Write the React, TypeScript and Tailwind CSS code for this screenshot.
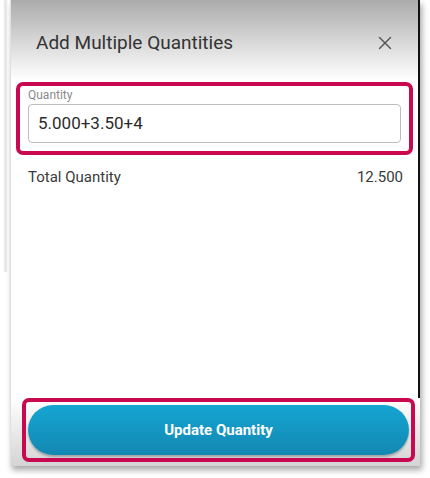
import { X } from "lucide-react";

export default function App() {
  return (
    <div className="relative h-[478px] w-[430px] overflow-hidden bg-white font-['Roboto',sans-serif]">
      {/* faint backdrop edge on the left */}
      <div className="absolute left-[3px] top-0 h-[272px] w-[5px] bg-gradient-to-r from-transparent via-[#e4e4e4] to-transparent" />

      <div className="relative ml-[10px] flex h-[466px] w-[410px] flex-col border-l border-[#e0e0e0] bg-white shadow-[2px_4px_6px_rgba(0,0,0,0.35)]">
        {/* Header */}
        <div className="flex h-[80px] items-center justify-between border-r-2 border-[#111] bg-gradient-to-b from-[#ababab] via-[#d6d6d6] to-white pl-[25px] pr-[22px] pt-[6px]">
          <h1 className="text-[19px] text-[#333]">Add Multiple Quantities</h1>
          <X className="h-[22px] w-[22px] text-[#555]" strokeWidth={1.6} />
        </div>

        {/* Body */}
        <div className="flex flex-1 flex-col border-r-2 border-[#111]">
          <div className="mx-[5px] mt-[2px] rounded-[7px] border-[4px] border-[#c8084f] px-[8px] pb-[8px] pt-[1px]">
            <div className="text-[12px] leading-[17px] text-[#8a8a8a]">Quantity</div>
            <div className="flex h-[39px] items-center rounded-[4px] border border-[#bdbdbd] px-[9px] text-[17px] text-[#2b2b2b]">
              5.000+3.50+4
            </div>
          </div>

          <div className="mt-[11px] flex items-center justify-between pl-[17px] pr-[15px] text-[15px] text-[#3a3a3a]">
            <span>Total Quantity</span>
            <span>12.500</span>
          </div>
        </div>

        {/* Footer */}
        <div className="h-[68px] bg-gradient-to-b from-white to-[#d4d4d4] pl-[11px] pr-[5px]">
          <div className="h-[64px] rounded-[7px] border-[4px] border-[#c8084f] px-[2px] pt-[3px]">
            <button className="flex h-[50px] w-full items-center justify-center rounded-full bg-gradient-to-b from-[#15a5d2] to-[#1288b2] text-[15px] font-bold text-white shadow-[0_2px_2px_rgba(0,0,0,0.25)]">
              Update Quantity
            </button>
          </div>
        </div>
      </div>
    </div>
  );
}
